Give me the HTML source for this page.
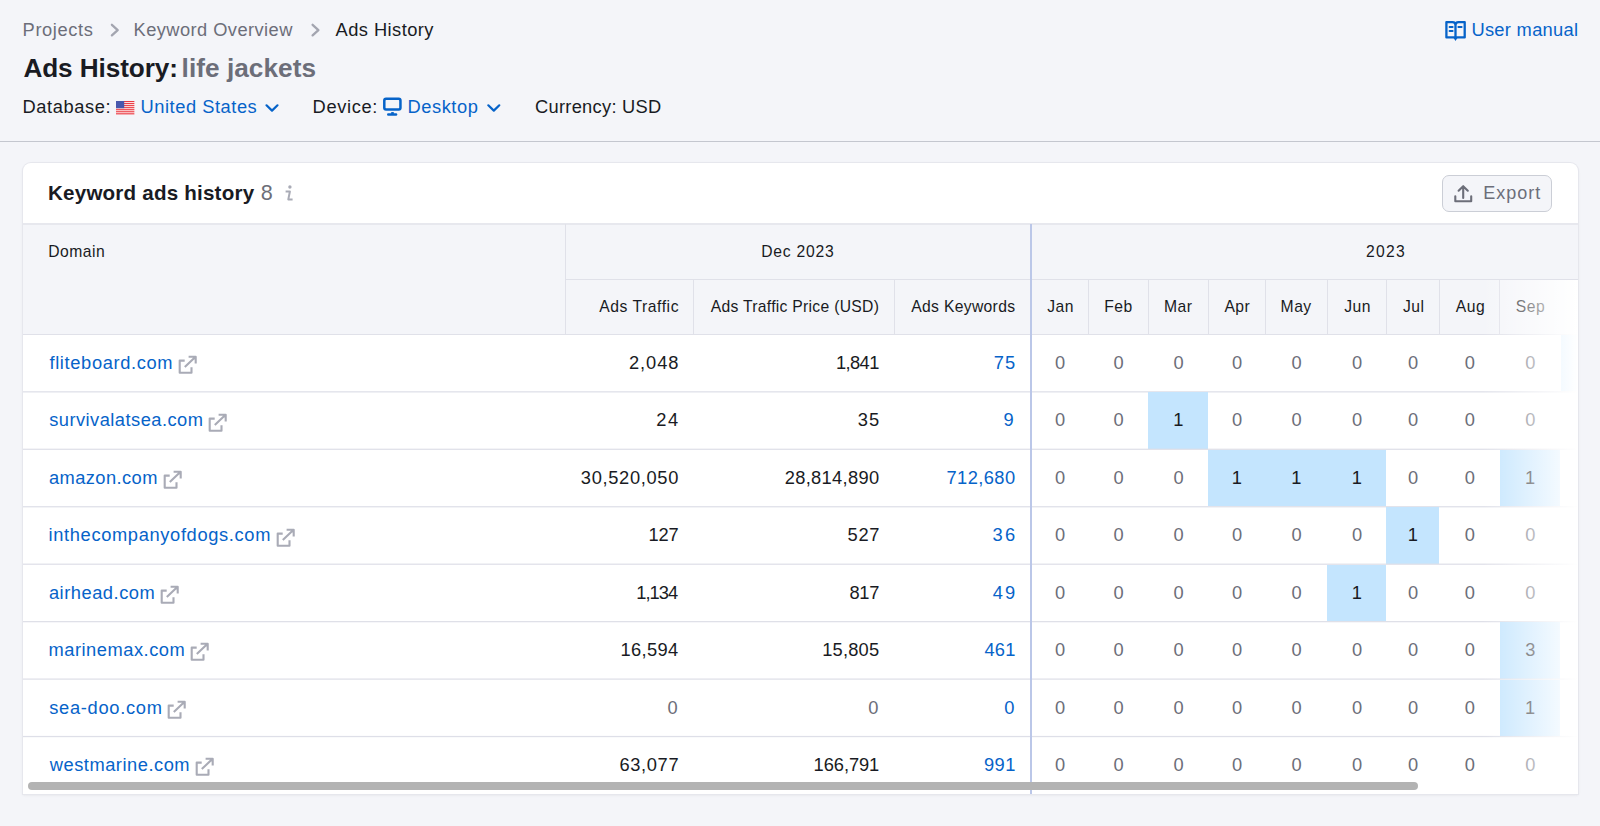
<!DOCTYPE html>
<html><head><meta charset="utf-8"><title>Ads History</title>
<style>
*{box-sizing:border-box;margin:0;padding:0}
html,body{width:1600px;height:826px;overflow:hidden;background:#f4f5f9;font-family:"Liberation Sans",sans-serif;color:#191b23}
.a{position:absolute;white-space:nowrap;line-height:20px}
.vl{position:absolute;width:1px;background:#e0e1e9}
.hl{position:absolute;height:1px;background:#e0e1e9}
.cell{position:absolute;background:#c4e5fe}
svg{position:absolute;overflow:visible}
</style></head><body>

<div class="a" style="left:22.60px;top:20.00px;font-size:18.3px;color:#6c6e79;letter-spacing:0.600px;">Projects</div>
<svg style="left:0;top:0" width="1" height="1"><path d="M111.9,24.8 l5.8,5.3 l-5.8,5.3" fill="none" stroke="#a3a5b0" stroke-width="2.3" stroke-linecap="round" stroke-linejoin="round"/></svg>
<div class="a" style="left:133.60px;top:20.00px;font-size:18.3px;color:#6c6e79;letter-spacing:0.423px;">Keyword Overview</div>
<svg style="left:0;top:0" width="1" height="1"><path d="M312.6,24.8 l5.8,5.3 l-5.8,5.3" fill="none" stroke="#a3a5b0" stroke-width="2.3" stroke-linecap="round" stroke-linejoin="round"/></svg>
<div class="a" style="left:335.60px;top:20.00px;font-size:18.3px;color:#191b23;letter-spacing:0.444px;">Ads History</div>
<div class="a" style="left:23.38px;top:58.00px;font-size:26.2px;color:#191b23;letter-spacing:-0.093px;font-weight:bold;">Ads History:</div>
<div class="a" style="left:181.59px;top:58.00px;font-size:26.2px;color:#6c6e79;letter-spacing:0.049px;font-weight:bold;">life jackets</div>
<div class="a" style="left:22.50px;top:97.00px;font-size:18.3px;color:#191b23;letter-spacing:0.586px;">Database:</div>
<svg style="left:115.6px;top:100.6px" width="18.4" height="13.4" viewBox="0 0 18.4 13.4"><rect width="18.4" height="13.4" fill="#fff"/><g fill="#ea3a42"><rect y="0.000" width="18.4" height="1.16"/><rect y="2.040" width="18.4" height="1.16"/><rect y="4.080" width="18.4" height="1.16"/><rect y="6.120" width="18.4" height="1.16"/><rect y="8.160" width="18.4" height="1.16"/><rect y="10.200" width="18.4" height="1.16"/><rect y="12.240" width="18.4" height="1.16"/></g><rect width="8.2" height="7.2" fill="#4858ad"/></svg>
<div class="a" style="left:140.53px;top:97.00px;font-size:18.3px;color:#0663c9;letter-spacing:0.539px;">United States</div>
<svg style="left:0;top:0" width="1" height="1"><path d="M266.5,105.3 l5.5,5.3 l5.5,-5.3" fill="none" stroke="#0663c9" stroke-width="2.2" stroke-linecap="round" stroke-linejoin="round"/></svg>
<div class="a" style="left:312.60px;top:97.00px;font-size:18.3px;color:#191b23;letter-spacing:0.627px;">Device:</div>
<svg style="left:0;top:0" width="1" height="1"><rect x="384.3" y="98.75" width="16.15" height="10.7" rx="1.7" fill="none" stroke="#0663c9" stroke-width="2.5"/><path d="M388.3,114.5 H396" fill="none" stroke="#0663c9" stroke-width="2.6" stroke-linecap="round"/><ellipse cx="392.5" cy="113.1" rx="1.7" ry="1.1" fill="#0663c9"/></svg>
<div class="a" style="left:407.40px;top:97.00px;font-size:18.3px;color:#0663c9;letter-spacing:0.577px;">Desktop</div>
<svg style="left:0;top:0" width="1" height="1"><path d="M488.3,105.3 l5.5,5.3 l5.5,-5.3" fill="none" stroke="#0663c9" stroke-width="2.2" stroke-linecap="round" stroke-linejoin="round"/></svg>
<div class="a" style="left:535.02px;top:97.00px;font-size:18.3px;color:#191b23;letter-spacing:0.277px;">Currency: USD</div>
<svg style="left:0;top:0" width="1" height="1"><path d="M1446.4,22.1 H1452.5 Q1455.5,22.1 1455.5,25 V37.4 H1446.4 Z M1464.7,22.1 H1458.5 Q1455.5,22.1 1455.5,25 V37.4 H1464.7 Z" fill="none" stroke="#0663c9" stroke-width="2.3" stroke-linejoin="round"/><path d="M1449.6,27 H1452.6 M1449.6,31 H1452.6 M1458.4,27 H1461.6" stroke="#0663c9" stroke-width="2" stroke-linecap="round"/><path d="M1453.6,38 L1455.5,41 L1457.4,38 Z" fill="#0663c9"/></svg>
<div class="a" style="left:1471.42px;top:20.00px;font-size:18.3px;color:#0663c9;letter-spacing:0.305px;">User manual</div>
<div class="hl" style="left:0;top:141px;width:1600px;background:#c4c7cf"></div>
<div class="a" style="left:23px;top:163px;width:1555px;height:631px;background:#fff;border-radius:8px 8px 0 0;box-shadow:0 0 0 1px #e6e7ed,0 1px 3px rgba(25,27,35,.10)"></div>
<div class="a" style="left:48.02px;top:183.00px;font-size:20.6px;color:#191b23;letter-spacing:0.196px;font-weight:bold;">Keyword ads history</div>
<div class="a" style="left:260.86px;top:183.00px;font-size:21.6px;color:#6c6e79;">8</div>
<svg style="left:0;top:0" width="1" height="1"><circle cx="289.9" cy="187" r="1.7" fill="#a9abb6"/><path d="M285.6,191.5 H289.9 L288.3,199.4 H292.6" fill="none" stroke="#a9abb6" stroke-width="2" stroke-linejoin="round"/></svg>
<div class="a" style="left:1442px;top:175px;width:110px;height:37px;border:1px solid #cbced6;border-radius:7px;background:#f4f5f9"></div>
<svg style="left:0;top:0" width="1" height="1"><path d="M1463.2,198 V186.3 M1458.6,190.7 L1463.2,186.2 L1467.8,190.7 M1455.3,196.3 V201.3 H1471.2 V196.3" fill="none" stroke="#6c6e79" stroke-width="2.1" stroke-linejoin="round" stroke-linecap="round"/></svg>
<div class="a" style="left:1483.26px;top:183.00px;font-size:18.0px;color:#6c6e79;letter-spacing:1.012px;">Export</div>
<div class="a" style="left:23px;top:224px;width:1555px;height:110px;background:#f4f5f9"></div>
<div class="hl" style="left:23px;top:223px;width:1555px;height:2px;background:#e7e8ee"></div>
<div class="hl" style="left:565px;top:279px;width:1013px"></div>
<div class="hl" style="left:23px;top:334px;width:1555px"></div>
<div class="vl" style="left:565px;top:224px;height:110px"></div>
<div class="vl" style="left:693px;top:280px;height:54px"></div>
<div class="vl" style="left:894px;top:280px;height:54px"></div>
<div class="vl" style="left:1088px;top:280px;height:54px"></div>
<div class="vl" style="left:1148px;top:280px;height:54px"></div>
<div class="vl" style="left:1208px;top:280px;height:54px"></div>
<div class="vl" style="left:1265px;top:280px;height:54px"></div>
<div class="vl" style="left:1327px;top:280px;height:54px"></div>
<div class="vl" style="left:1386px;top:280px;height:54px"></div>
<div class="vl" style="left:1439px;top:280px;height:54px"></div>
<div class="vl" style="left:1499px;top:280px;height:54px"></div>
<div class="a" style="left:48.15px;top:242.00px;font-size:15.7px;color:#191b23;letter-spacing:0.498px;">Domain</div>
<div class="a" style="left:761.25px;top:242.00px;font-size:15.7px;color:#191b23;letter-spacing:0.750px;">Dec 2023</div>
<div class="a" style="left:1365.95px;top:242.00px;font-size:15.7px;color:#191b23;letter-spacing:1.333px;">2023</div>
<div class="a" style="left:599.30px;top:297.00px;font-size:15.7px;color:#191b23;letter-spacing:0.536px;">Ads Traffic</div>
<div class="a" style="left:710.70px;top:297.00px;font-size:15.7px;color:#191b23;letter-spacing:0.289px;">Ads Traffic Price (USD)</div>
<div class="a" style="left:911.30px;top:297.00px;font-size:15.7px;color:#191b23;letter-spacing:0.314px;">Ads Keywords</div>
<div class="a" style="left:1047.30px;top:297.00px;font-size:15.7px;color:#191b23;letter-spacing:0.450px;">Jan</div>
<div class="a" style="left:1104.21px;top:297.00px;font-size:15.7px;color:#191b23;letter-spacing:0.450px;">Feb</div>
<div class="a" style="left:1164.02px;top:297.00px;font-size:15.7px;color:#191b23;letter-spacing:0.450px;">Mar</div>
<div class="a" style="left:1224.46px;top:297.00px;font-size:15.7px;color:#191b23;letter-spacing:0.450px;">Apr</div>
<div class="a" style="left:1280.61px;top:297.00px;font-size:15.7px;color:#191b23;letter-spacing:0.450px;">May</div>
<div class="a" style="left:1344.30px;top:297.00px;font-size:15.7px;color:#191b23;letter-spacing:0.450px;">Jun</div>
<div class="a" style="left:1402.96px;top:297.00px;font-size:15.7px;color:#191b23;letter-spacing:0.450px;">Jul</div>
<div class="a" style="left:1455.83px;top:297.00px;font-size:15.7px;color:#191b23;letter-spacing:0.450px;">Aug</div>
<div class="a" style="left:1515.80px;top:297.00px;font-size:15.7px;color:#191b23;letter-spacing:0.450px;">Sep</div>
<div class="cell" style="left:1561px;top:335px;width:17px;height:56px"></div>
<div class="a" style="left:49.45px;top:353.00px;font-size:18.3px;color:#0663c9;letter-spacing:0.641px;">fliteboard.com</div>
<svg style="left:177.9px;top:355.1px" width="20" height="20" viewBox="0 0 20 20"><path d="M6.7,5.6 H1.7 V17.8 H13.5 V12.2 M6.8,12.1 L17.3,2.1 M10.6,1.8 H17.7 V8.6" fill="none" stroke="#a9abb6" stroke-width="2.1" stroke-linejoin="round"/></svg>
<div class="a" style="left:628.92px;top:353.00px;font-size:18.3px;color:#191b23;letter-spacing:0.953px;">2,048</div>
<div class="a" style="left:836.02px;top:353.00px;font-size:18.3px;color:#191b23;letter-spacing:-0.616px;">1,841</div>
<div class="a" style="left:993.76px;top:353.00px;font-size:18.3px;color:#0663c9;letter-spacing:1.112px;">75</div>
<div class="a" style="left:1054.91px;top:353.00px;font-size:18.3px;color:#6c6e79;">0</div>
<div class="a" style="left:1113.41px;top:353.00px;font-size:18.3px;color:#6c6e79;">0</div>
<div class="a" style="left:1173.41px;top:353.00px;font-size:18.3px;color:#6c6e79;">0</div>
<div class="a" style="left:1231.91px;top:353.00px;font-size:18.3px;color:#6c6e79;">0</div>
<div class="a" style="left:1291.41px;top:353.00px;font-size:18.3px;color:#6c6e79;">0</div>
<div class="a" style="left:1351.91px;top:353.00px;font-size:18.3px;color:#6c6e79;">0</div>
<div class="a" style="left:1407.91px;top:353.00px;font-size:18.3px;color:#6c6e79;">0</div>
<div class="a" style="left:1464.66px;top:353.00px;font-size:18.3px;color:#6c6e79;">0</div>
<div class="a" style="left:1525.16px;top:353.00px;font-size:18.3px;color:#6c6e79;">0</div>
<div class="hl" style="left:23px;top:391px;width:1555px;background:rgba(222,223,232,0.78)"></div>
<div class="hl" style="left:23px;top:392px;width:1555px;background:rgba(222,223,232,0.47)"></div>
<div class="cell" style="left:1148px;top:392px;width:60px;height:57px"></div>
<div class="a" style="left:49.20px;top:410.00px;font-size:18.3px;color:#0663c9;letter-spacing:0.464px;">survivalatsea.com</div>
<svg style="left:208.3px;top:412.5px" width="20" height="20" viewBox="0 0 20 20"><path d="M6.7,5.6 H1.7 V17.8 H13.5 V12.2 M6.8,12.1 L17.3,2.1 M10.6,1.8 H17.7 V8.6" fill="none" stroke="#a9abb6" stroke-width="2.1" stroke-linejoin="round"/></svg>
<div class="a" style="left:656.23px;top:410.00px;font-size:18.3px;color:#191b23;letter-spacing:1.700px;">24</div>
<div class="a" style="left:857.71px;top:410.00px;font-size:18.3px;color:#191b23;letter-spacing:1.163px;">35</div>
<div class="a" style="left:1003.39px;top:410.00px;font-size:18.3px;color:#0663c9;">9</div>
<div class="a" style="left:1054.91px;top:410.00px;font-size:18.3px;color:#6c6e79;">0</div>
<div class="a" style="left:1113.41px;top:410.00px;font-size:18.3px;color:#6c6e79;">0</div>
<div class="a" style="left:1173.16px;top:410.00px;font-size:18.3px;color:#191b23;">1</div>
<div class="a" style="left:1231.91px;top:410.00px;font-size:18.3px;color:#6c6e79;">0</div>
<div class="a" style="left:1291.41px;top:410.00px;font-size:18.3px;color:#6c6e79;">0</div>
<div class="a" style="left:1351.91px;top:410.00px;font-size:18.3px;color:#6c6e79;">0</div>
<div class="a" style="left:1407.91px;top:410.00px;font-size:18.3px;color:#6c6e79;">0</div>
<div class="a" style="left:1464.66px;top:410.00px;font-size:18.3px;color:#6c6e79;">0</div>
<div class="a" style="left:1525.16px;top:410.00px;font-size:18.3px;color:#6c6e79;">0</div>
<div class="hl" style="left:23px;top:448px;width:1555px;background:rgba(222,223,232,0.33)"></div>
<div class="hl" style="left:23px;top:449px;width:1555px;background:rgba(222,223,232,0.92)"></div>
<div class="cell" style="left:1208px;top:450px;width:57px;height:56px"></div>
<div class="cell" style="left:1265px;top:450px;width:62px;height:56px"></div>
<div class="cell" style="left:1327px;top:450px;width:59px;height:56px"></div>
<div class="cell" style="left:1500px;top:450px;width:60px;height:56px"></div>
<div class="a" style="left:48.95px;top:468.00px;font-size:18.3px;color:#0663c9;letter-spacing:0.425px;">amazon.com</div>
<svg style="left:162.7px;top:470.0px" width="20" height="20" viewBox="0 0 20 20"><path d="M6.7,5.6 H1.7 V17.8 H13.5 V12.2 M6.8,12.1 L17.3,2.1 M10.6,1.8 H17.7 V8.6" fill="none" stroke="#a9abb6" stroke-width="2.1" stroke-linejoin="round"/></svg>
<div class="a" style="left:580.81px;top:468.00px;font-size:18.3px;color:#191b23;letter-spacing:0.672px;">30,520,050</div>
<div class="a" style="left:784.73px;top:468.00px;font-size:18.3px;color:#191b23;letter-spacing:0.315px;">28,814,890</div>
<div class="a" style="left:946.56px;top:468.00px;font-size:18.3px;color:#0663c9;letter-spacing:0.406px;">712,680</div>
<div class="a" style="left:1054.91px;top:468.00px;font-size:18.3px;color:#6c6e79;">0</div>
<div class="a" style="left:1113.41px;top:468.00px;font-size:18.3px;color:#6c6e79;">0</div>
<div class="a" style="left:1173.41px;top:468.00px;font-size:18.3px;color:#6c6e79;">0</div>
<div class="a" style="left:1231.66px;top:468.00px;font-size:18.3px;color:#191b23;">1</div>
<div class="a" style="left:1291.16px;top:468.00px;font-size:18.3px;color:#191b23;">1</div>
<div class="a" style="left:1351.66px;top:468.00px;font-size:18.3px;color:#191b23;">1</div>
<div class="a" style="left:1407.91px;top:468.00px;font-size:18.3px;color:#6c6e79;">0</div>
<div class="a" style="left:1464.66px;top:468.00px;font-size:18.3px;color:#6c6e79;">0</div>
<div class="a" style="left:1524.91px;top:468.00px;font-size:18.3px;color:#191b23;">1</div>
<div class="hl" style="left:23px;top:506px;width:1555px;background:rgba(222,223,232,0.88)"></div>
<div class="hl" style="left:23px;top:507px;width:1555px;background:rgba(222,223,232,0.38)"></div>
<div class="cell" style="left:1386px;top:507px;width:53px;height:57px"></div>
<div class="a" style="left:48.51px;top:525.00px;font-size:18.3px;color:#0663c9;letter-spacing:0.647px;">inthecompanyofdogs.com</div>
<svg style="left:275.9px;top:527.5px" width="20" height="20" viewBox="0 0 20 20"><path d="M6.7,5.6 H1.7 V17.8 H13.5 V12.2 M6.8,12.1 L17.3,2.1 M10.6,1.8 H17.7 V8.6" fill="none" stroke="#a9abb6" stroke-width="2.1" stroke-linejoin="round"/></svg>
<div class="a" style="left:648.52px;top:525.00px;font-size:18.3px;color:#191b23;letter-spacing:-0.206px;">127</div>
<div class="a" style="left:847.61px;top:525.00px;font-size:18.3px;color:#191b23;letter-spacing:0.600px;">527</div>
<div class="a" style="left:992.51px;top:525.00px;font-size:18.3px;color:#0663c9;letter-spacing:2.362px;">36</div>
<div class="a" style="left:1054.91px;top:525.00px;font-size:18.3px;color:#6c6e79;">0</div>
<div class="a" style="left:1113.41px;top:525.00px;font-size:18.3px;color:#6c6e79;">0</div>
<div class="a" style="left:1173.41px;top:525.00px;font-size:18.3px;color:#6c6e79;">0</div>
<div class="a" style="left:1231.91px;top:525.00px;font-size:18.3px;color:#6c6e79;">0</div>
<div class="a" style="left:1291.41px;top:525.00px;font-size:18.3px;color:#6c6e79;">0</div>
<div class="a" style="left:1351.91px;top:525.00px;font-size:18.3px;color:#6c6e79;">0</div>
<div class="a" style="left:1407.66px;top:525.00px;font-size:18.3px;color:#191b23;">1</div>
<div class="a" style="left:1464.66px;top:525.00px;font-size:18.3px;color:#6c6e79;">0</div>
<div class="a" style="left:1525.16px;top:525.00px;font-size:18.3px;color:#6c6e79;">0</div>
<div class="hl" style="left:23px;top:563px;width:1555px;background:rgba(222,223,232,0.42)"></div>
<div class="hl" style="left:23px;top:564px;width:1555px;background:rgba(222,223,232,0.83)"></div>
<div class="cell" style="left:1327px;top:565px;width:59px;height:56px"></div>
<div class="a" style="left:48.95px;top:583.00px;font-size:18.3px;color:#0663c9;letter-spacing:0.519px;">airhead.com</div>
<svg style="left:160.0px;top:584.9px" width="20" height="20" viewBox="0 0 20 20"><path d="M6.7,5.6 H1.7 V17.8 H13.5 V12.2 M6.8,12.1 L17.3,2.1 M10.6,1.8 H17.7 V8.6" fill="none" stroke="#a9abb6" stroke-width="2.1" stroke-linejoin="round"/></svg>
<div class="a" style="left:636.23px;top:583.00px;font-size:18.3px;color:#191b23;letter-spacing:-0.934px;">1,134</div>
<div class="a" style="left:849.55px;top:583.00px;font-size:18.3px;color:#191b23;letter-spacing:-0.369px;">817</div>
<div class="a" style="left:992.83px;top:583.00px;font-size:18.3px;color:#0663c9;letter-spacing:2.112px;">49</div>
<div class="a" style="left:1054.91px;top:583.00px;font-size:18.3px;color:#6c6e79;">0</div>
<div class="a" style="left:1113.41px;top:583.00px;font-size:18.3px;color:#6c6e79;">0</div>
<div class="a" style="left:1173.41px;top:583.00px;font-size:18.3px;color:#6c6e79;">0</div>
<div class="a" style="left:1231.91px;top:583.00px;font-size:18.3px;color:#6c6e79;">0</div>
<div class="a" style="left:1291.41px;top:583.00px;font-size:18.3px;color:#6c6e79;">0</div>
<div class="a" style="left:1351.66px;top:583.00px;font-size:18.3px;color:#191b23;">1</div>
<div class="a" style="left:1407.91px;top:583.00px;font-size:18.3px;color:#6c6e79;">0</div>
<div class="a" style="left:1464.66px;top:583.00px;font-size:18.3px;color:#6c6e79;">0</div>
<div class="a" style="left:1525.16px;top:583.00px;font-size:18.3px;color:#6c6e79;">0</div>
<div class="hl" style="left:23px;top:621px;width:1555px;background:rgba(222,223,232,0.98)"></div>
<div class="hl" style="left:23px;top:622px;width:1555px;background:rgba(222,223,232,0.27)"></div>
<div class="cell" style="left:1500px;top:622px;width:60px;height:57px"></div>
<div class="a" style="left:48.51px;top:640.00px;font-size:18.3px;color:#0663c9;letter-spacing:0.519px;">marinemax.com</div>
<svg style="left:190.1px;top:642.4px" width="20" height="20" viewBox="0 0 20 20"><path d="M6.7,5.6 H1.7 V17.8 H13.5 V12.2 M6.8,12.1 L17.3,2.1 M10.6,1.8 H17.7 V8.6" fill="none" stroke="#a9abb6" stroke-width="2.1" stroke-linejoin="round"/></svg>
<div class="a" style="left:620.42px;top:640.00px;font-size:18.3px;color:#191b23;letter-spacing:0.375px;">16,594</div>
<div class="a" style="left:822.23px;top:640.00px;font-size:18.3px;color:#191b23;letter-spacing:0.205px;">15,805</div>
<div class="a" style="left:984.52px;top:640.00px;font-size:18.3px;color:#0663c9;letter-spacing:0.144px;">461</div>
<div class="a" style="left:1054.91px;top:640.00px;font-size:18.3px;color:#6c6e79;">0</div>
<div class="a" style="left:1113.41px;top:640.00px;font-size:18.3px;color:#6c6e79;">0</div>
<div class="a" style="left:1173.41px;top:640.00px;font-size:18.3px;color:#6c6e79;">0</div>
<div class="a" style="left:1231.91px;top:640.00px;font-size:18.3px;color:#6c6e79;">0</div>
<div class="a" style="left:1291.41px;top:640.00px;font-size:18.3px;color:#6c6e79;">0</div>
<div class="a" style="left:1351.91px;top:640.00px;font-size:18.3px;color:#6c6e79;">0</div>
<div class="a" style="left:1407.91px;top:640.00px;font-size:18.3px;color:#6c6e79;">0</div>
<div class="a" style="left:1464.66px;top:640.00px;font-size:18.3px;color:#6c6e79;">0</div>
<div class="a" style="left:1525.19px;top:640.00px;font-size:18.3px;color:#191b23;">3</div>
<div class="hl" style="left:23px;top:678px;width:1555px;background:rgba(222,223,232,0.52)"></div>
<div class="hl" style="left:23px;top:679px;width:1555px;background:rgba(222,223,232,0.73)"></div>
<div class="cell" style="left:1500px;top:680px;width:60px;height:56px"></div>
<div class="a" style="left:49.20px;top:698.00px;font-size:18.3px;color:#0663c9;letter-spacing:0.711px;">sea-doo.com</div>
<svg style="left:167.3px;top:699.8px" width="20" height="20" viewBox="0 0 20 20"><path d="M6.7,5.6 H1.7 V17.8 H13.5 V12.2 M6.8,12.1 L17.3,2.1 M10.6,1.8 H17.7 V8.6" fill="none" stroke="#a9abb6" stroke-width="2.1" stroke-linejoin="round"/></svg>
<div class="a" style="left:667.61px;top:698.00px;font-size:18.3px;color:#6c6e79;">0</div>
<div class="a" style="left:868.31px;top:698.00px;font-size:18.3px;color:#6c6e79;">0</div>
<div class="a" style="left:1004.31px;top:698.00px;font-size:18.3px;color:#0663c9;">0</div>
<div class="a" style="left:1054.91px;top:698.00px;font-size:18.3px;color:#6c6e79;">0</div>
<div class="a" style="left:1113.41px;top:698.00px;font-size:18.3px;color:#6c6e79;">0</div>
<div class="a" style="left:1173.41px;top:698.00px;font-size:18.3px;color:#6c6e79;">0</div>
<div class="a" style="left:1231.91px;top:698.00px;font-size:18.3px;color:#6c6e79;">0</div>
<div class="a" style="left:1291.41px;top:698.00px;font-size:18.3px;color:#6c6e79;">0</div>
<div class="a" style="left:1351.91px;top:698.00px;font-size:18.3px;color:#6c6e79;">0</div>
<div class="a" style="left:1407.91px;top:698.00px;font-size:18.3px;color:#6c6e79;">0</div>
<div class="a" style="left:1464.66px;top:698.00px;font-size:18.3px;color:#6c6e79;">0</div>
<div class="a" style="left:1524.91px;top:698.00px;font-size:18.3px;color:#191b23;">1</div>
<div class="hl" style="left:23px;top:735px;width:1555px;background:rgba(222,223,232,0.08)"></div>
<div class="hl" style="left:23px;top:736px;width:1555px;background:rgba(222,223,232,1.00)"></div>
<div class="hl" style="left:23px;top:737px;width:1555px;background:rgba(222,223,232,0.17)"></div>
<div class="a" style="left:49.76px;top:755.00px;font-size:18.3px;color:#0663c9;letter-spacing:0.516px;">westmarine.com</div>
<svg style="left:194.9px;top:757.2px" width="20" height="20" viewBox="0 0 20 20"><path d="M6.7,5.6 H1.7 V17.8 H13.5 V12.2 M6.8,12.1 L17.3,2.1 M10.6,1.8 H17.7 V8.6" fill="none" stroke="#a9abb6" stroke-width="2.1" stroke-linejoin="round"/></svg>
<div class="a" style="left:619.42px;top:755.00px;font-size:18.3px;color:#191b23;letter-spacing:0.650px;">63,077</div>
<div class="a" style="left:813.62px;top:755.00px;font-size:18.3px;color:#191b23;letter-spacing:-0.073px;">166,791</div>
<div class="a" style="left:984.09px;top:755.00px;font-size:18.3px;color:#0663c9;letter-spacing:0.363px;">991</div>
<div class="a" style="left:1054.91px;top:755.00px;font-size:18.3px;color:#6c6e79;">0</div>
<div class="a" style="left:1113.41px;top:755.00px;font-size:18.3px;color:#6c6e79;">0</div>
<div class="a" style="left:1173.41px;top:755.00px;font-size:18.3px;color:#6c6e79;">0</div>
<div class="a" style="left:1231.91px;top:755.00px;font-size:18.3px;color:#6c6e79;">0</div>
<div class="a" style="left:1291.41px;top:755.00px;font-size:18.3px;color:#6c6e79;">0</div>
<div class="a" style="left:1351.91px;top:755.00px;font-size:18.3px;color:#6c6e79;">0</div>
<div class="a" style="left:1407.91px;top:755.00px;font-size:18.3px;color:#6c6e79;">0</div>
<div class="a" style="left:1464.66px;top:755.00px;font-size:18.3px;color:#6c6e79;">0</div>
<div class="a" style="left:1525.16px;top:755.00px;font-size:18.3px;color:#6c6e79;">0</div>
<div class="vl" style="left:1030px;top:224px;height:570px;background:#bbc7e8;width:2px"></div>
<div class="a" style="left:1482px;top:280px;width:96px;height:514px;background:linear-gradient(to right,rgba(255,255,255,0),#fff)"></div>
<div class="a" style="left:28px;top:782px;width:1390px;height:8px;border-radius:4px;background:#b3b3b3"></div>
</body></html>
